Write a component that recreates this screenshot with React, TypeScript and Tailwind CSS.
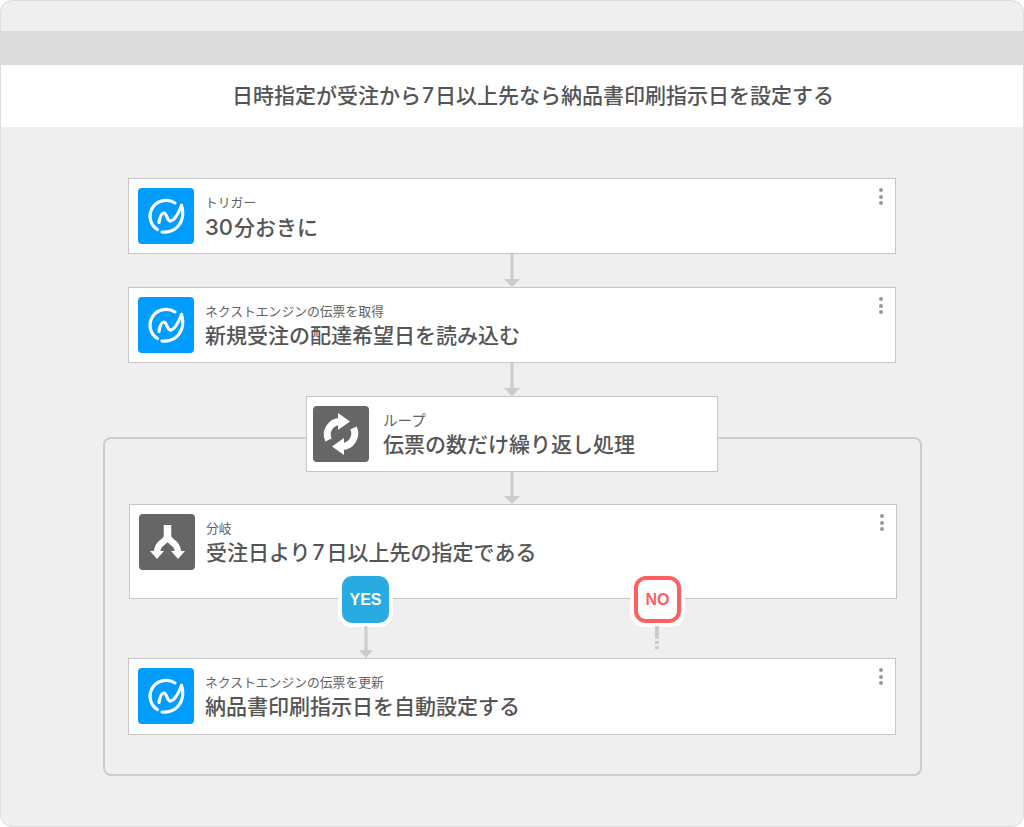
import type { ReactNode } from 'react'

function LogoIcon() {
  return (
    <div className="flex size-14 shrink-0 items-center justify-center rounded-[4px] bg-[#009dff]">
      <svg viewBox="0 0 56 56" className="size-14" fill="none" stroke="#fff" strokeWidth="3.2" strokeLinecap="round" strokeLinejoin="round">
        <path d="M37 15 C30 10.5 20 12 15 19 C9.5 27 12 37 19.5 41.5" />
        <path d="M21 34.5 C22 28 24 25 26 25 C29 25 29 34 33 33 C37 32 41 24 43.5 17.5" />
        <path d="M43.5 17.5 C46.5 27 44 36 37 41 C32.5 44 28 44.5 24 44" />
      </svg>
    </div>
  )
}

function LoopIcon() {
  return (
    <div className="flex size-14 shrink-0 items-center justify-center rounded-[4px] bg-[#666666]">
      <svg viewBox="0 0 56 56" className="size-14" fill="none" stroke="#fff" strokeWidth="7">
        <path d="M15.5 34 A13 13 0 0 1 27 15.5" />
        <path d="M40.5 22 A13 13 0 0 1 29 40.5" />
        <path d="M25 7 L37 15.5 L25 24 Z" fill="#fff" stroke="none" />
        <path d="M31 32 L19 40.5 L31 49 Z" fill="#fff" stroke="none" />
      </svg>
    </div>
  )
}

function BranchIcon() {
  return (
    <div className="flex size-14 shrink-0 items-center justify-center rounded-[4px] bg-[#666666]">
      <svg viewBox="0 0 56 56" className="size-14" fill="none" stroke="#fff">
        <path d="M28.5 11 V24" strokeWidth="7.5" />
        <path d="M28.5 21 C28.5 29 18 27 18 39" strokeWidth="6.5" />
        <path d="M28.5 21 C28.5 29 39 27 39 39" strokeWidth="6.5" />
        <path d="M11 37 L25 37 L18 45 Z" fill="#fff" stroke="none" />
        <path d="M32 37 L46 37 L39 45 Z" fill="#fff" stroke="none" />
      </svg>
    </div>
  )
}

function Dots() {
  return (
    <div className="ml-auto mr-[2px] flex flex-col gap-[2.5px]">
      <span className="size-[4px] rounded-full bg-[#999999]" />
      <span className="size-[4px] rounded-full bg-[#999999]" />
      <span className="size-[4px] rounded-full bg-[#999999]" />
    </div>
  )
}

function Card({
  icon,
  label,
  title,
  className,
  textClass = 'ml-[11px]',
  labelClass = 'text-[12.8px]',
  menu = true,
}: {
  icon: ReactNode
  label: string
  title: ReactNode
  className: string
  textClass?: string
  labelClass?: string
  menu?: boolean
}) {
  return (
    <div className={`flex border border-[#c6c6c6] bg-white pt-[9px] pr-[10px] ${className}`}>
      {icon}
      <div className={`flex flex-col ${textClass}`}>
        <span className={`mt-[7px] leading-[16px] text-[#626262] ${labelClass}`}>{label}</span>
        <span className="mt-[1px] text-[21px] font-medium leading-[30px] text-[#555555]">{title}</span>
      </div>
      {menu ? <Dots /> : null}
    </div>
  )
}

function Arrow({ className = '' }: { className?: string }) {
  return (
    <svg viewBox="0 0 16 33" className={`block h-[33px] w-4 ${className}`}>
      <rect x="6.5" y="0" width="3" height="26" fill="#cccccc" />
      <path d="M0 25 L16 25 L8 33 Z" fill="#cccccc" />
    </svg>
  )
}

export default function App() {
  return (
    <div className="h-[827px] w-[1024px] overflow-hidden rounded-[12px] border border-[#dddddd] bg-[#efefef] font-['Inter','Noto_Sans_CJK_JP',sans-serif]">
      <div className="mt-[30px] h-[34px] bg-[#dcdcdc]" />
      <div className="flex h-[62px] items-center bg-white pl-[231px]">
        <h1 className="text-[21px] font-medium text-[#555555]">
          日時指定が受注から<span className="mx-[1px]">7</span>日以上先なら納品書印刷指示日を設定する
        </h1>
      </div>

      <div className="pt-[51px]">
        <Card
          className="ml-[127px] h-[76px] w-[768px] pl-[9px]"
          icon={<LogoIcon />}
          label="トリガー"
          title={
            <>
              <span className="mr-[1px] text-[22px]">30</span>分おきに
            </>
          }
        />
        <Arrow className="ml-[503px]" />
        <Card className="ml-[127px] h-[76px] w-[768px] pl-[9px]" icon={<LogoIcon />} label="ネクストエンジンの伝票を取得" title="新規受注の配達希望日を読み込む" />
        <Arrow className="ml-[503px]" />

        <div className="ml-[102px] mt-[41px] h-[339px] w-[819px] rounded-[8px] border-2 border-[#cccccc]">
          <Card
            className="ml-[201px] -mt-[43px] h-[76px] w-[412px] pl-[6px]"
            icon={<LoopIcon />}
            label="ループ"
            labelClass="text-[14.6px]"
            title="伝票の数だけ繰り返し処理"
            textClass="ml-[14px]"
            menu={false}
          />
          <svg viewBox="0 0 16 32" className="ml-[399px] block h-[32px] w-4">
            <rect x="6.5" y="0" width="3" height="25" fill="#cccccc" />
            <path d="M0 24 L16 24 L8 32 Z" fill="#cccccc" />
          </svg>
          <Card
            className="ml-[24px] h-[95px] w-[768px] pl-[9px]"
            icon={<BranchIcon />}
            label="分岐"
            title={
              <>
                受注日より<span className="mx-[2px]">7</span>日以上先の指定である
              </>
            }
          />

          <div className="relative h-[59px]">
            <div className="absolute left-[233px] top-[-27px] flex size-[55px] items-center justify-center rounded-[14px] border-[4px] border-white bg-[#29abe2] font-['Liberation_Sans',sans-serif] text-[16px] font-bold text-white">
              YES
            </div>
            <svg viewBox="0 0 16 32" className="absolute left-[253px] top-[27px] h-[32px] w-4">
              <rect x="6.5" y="0" width="3" height="25" fill="#cccccc" />
              <path d="M1 24 L15 24 L8 32 Z" fill="#cccccc" />
            </svg>

            <div className="absolute left-[525px] top-[-27px] rounded-[14px] bg-white p-[4px]">
              <div className="flex size-[47px] items-center justify-center rounded-[12px] border-[4px] border-[#ff5f5f] font-['Liberation_Sans',sans-serif] text-[16px] font-bold text-[#ff5f5f]">
                NO
              </div>
            </div>
            <div className="absolute left-[550px] top-[27px] flex w-[4px] flex-col gap-[2px]">
              <span className="h-[13px] bg-[#cccccc]" />
              <span className="h-[3px] bg-[#cccccc]" />
              <span className="h-[3px] bg-[#cccccc]" />
            </div>
          </div>

          <Card className="ml-[23px] h-[77px] w-[768px] pl-[9px]" icon={<LogoIcon />} label="ネクストエンジンの伝票を更新" title="納品書印刷指示日を自動設定する" />
        </div>
      </div>
    </div>
  )
}
